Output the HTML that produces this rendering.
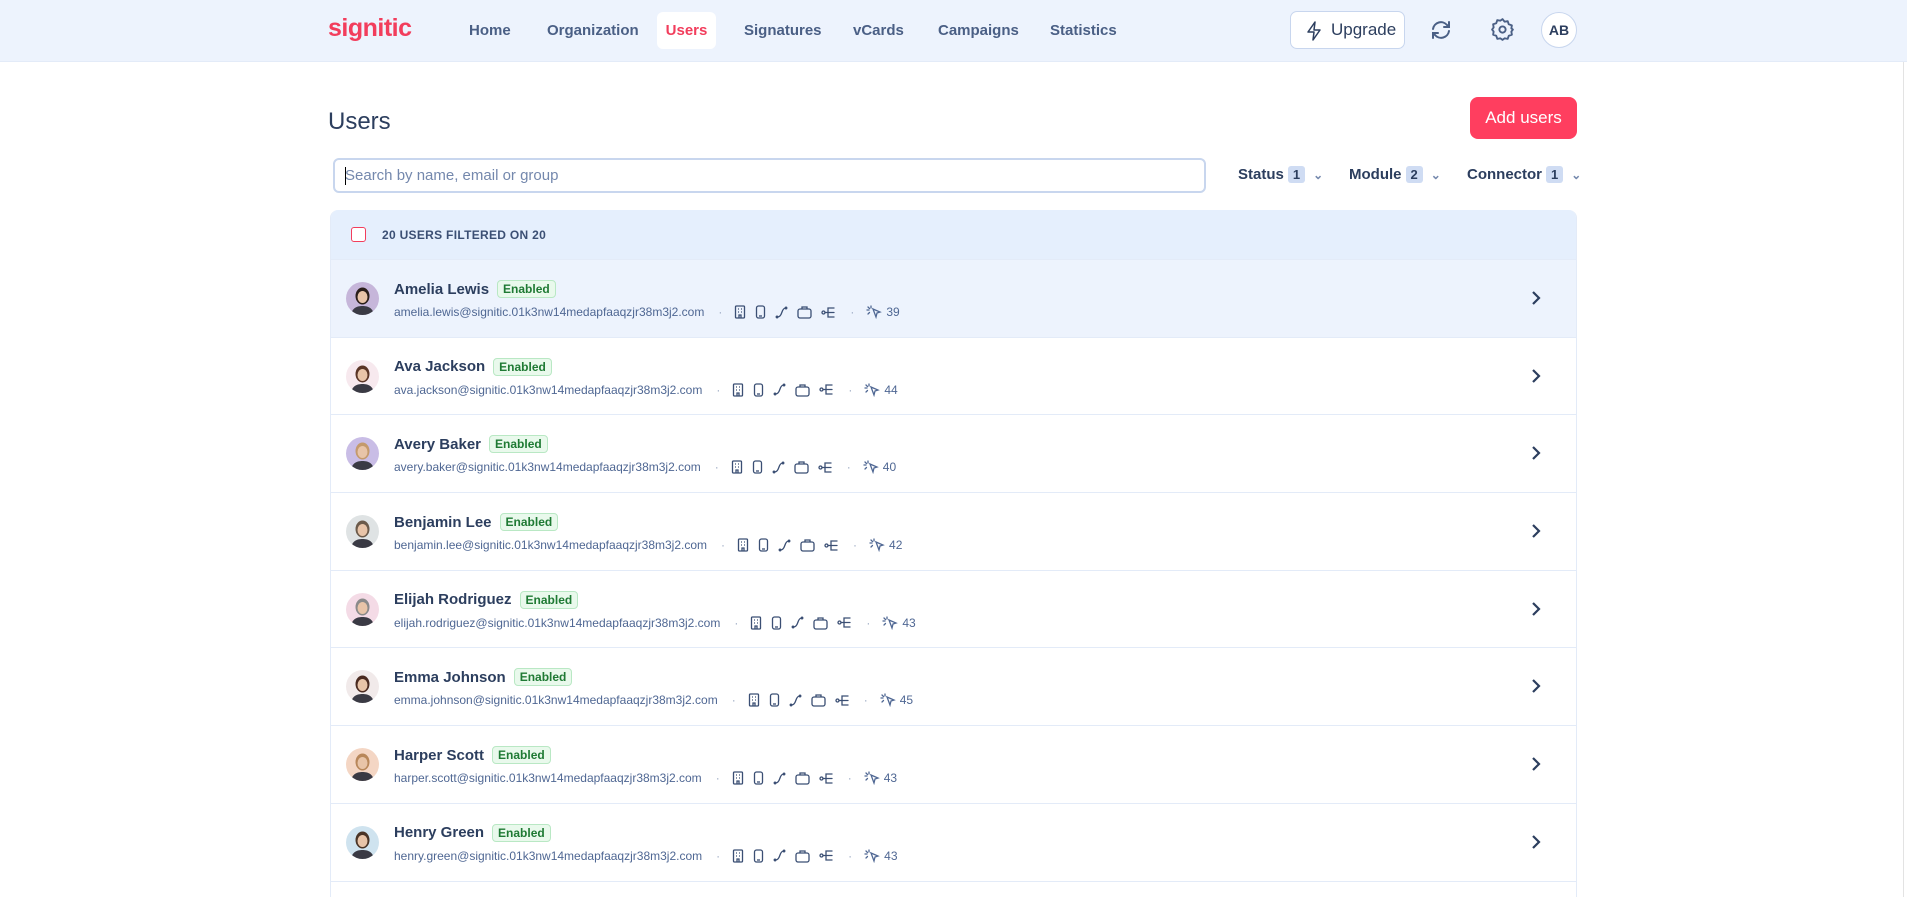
<!DOCTYPE html>
<html><head><meta charset="utf-8"><style>
*{box-sizing:border-box;margin:0;padding:0}
body{width:1907px;height:897px;overflow:hidden;background:#fff;font-family:"Liberation Sans",sans-serif;color:#2c3e5e;position:relative}
.nav{position:absolute;left:0;top:0;width:1907px;height:62px;background:#edf3fd;border-bottom:1px solid #e3ebf8}
.logo{position:absolute;left:328px;top:14px;font-size:25px;font-weight:bold;color:#f23d5c;letter-spacing:-0.5px}
.ni{position:absolute;top:22px;font-size:15px;color:#4a5f85;font-weight:bold}
.users{position:absolute;left:657px;top:12px;width:59px;height:37px;background:#fff;border-radius:6px;color:#f23d5c;font-size:15px;font-weight:bold;text-align:center;line-height:37px}
.upg{position:absolute;left:1290px;top:11px;width:115px;height:38px;border:1px solid #c8d6ee;background:#fff;border-radius:7px;font-size:17px;color:#2c3e5e;line-height:36px;padding-left:40px}
.ab{position:absolute;left:1541px;top:12px;width:36px;height:36px;border-radius:50%;background:#fff;border:1px solid #c8d6ee;font-size:14px;font-weight:bold;text-align:center;line-height:34px}
h1{position:absolute;left:328px;top:108px;font-size:24px;font-weight:normal;color:#2c3e5e}
.add{position:absolute;left:1470px;top:97px;width:107px;height:42px;background:#ff3e5f;border-radius:8px;color:#fff;font-size:17px;text-align:center;line-height:42px}
.search{position:absolute;left:333px;top:158px;width:873px;height:35px;border:2px solid #c8d6ee;border-radius:6px;font-size:15px;color:#7488ad;line-height:31px;padding-left:10px}
.search:before{content:"";position:absolute;left:10px;top:7px;width:1px;height:18px;background:#000}
.flt{position:absolute;top:166px;font-size:15px;color:#2c3e5e;font-weight:bold}
.flt b{display:inline-block;background:#cfdcf3;border-radius:3px;padding:1px 5px;margin-left:4px;font-size:13px}
.flt i{font-style:normal;color:#7488ad;margin-left:8px;font-size:12px}
.list{position:absolute;left:330px;top:210px;width:1247px;height:687px;border-left:1px solid #e3ebf8;border-right:1px solid #e3ebf8;border-radius:8px 8px 0 0;overflow:hidden}
.hdr{height:49px;background:#e5effd;position:relative}
.cb{position:absolute;left:20px;top:17px;width:15px;height:15px;border:1.5px solid #f23d5c;border-radius:3px;background:#fff}
.hdr span{position:absolute;left:51px;top:18px;font-size:12px;font-weight:bold;color:#3b4f74;letter-spacing:.3px}
.row{height:77.7px;border-top:1px solid #e3ebf8;position:relative}
.row.hl{background:#edf3fd}
.av{position:absolute;left:15px;top:22px;width:33px;height:33px;border-radius:50%;overflow:hidden}
.nm{position:absolute;left:63px;top:20px;font-size:15px;font-weight:bold;color:#2c3e5e;display:flex;align-items:center}
.en{margin-left:8px;background:#e9f9ec;border:1px solid #b9e8c4;color:#1f7a34;font-size:12px;font-weight:bold;padding:1px 5px;border-radius:4px}
.em{position:absolute;left:63px;top:45px;font-size:12px;color:#4f6793;display:flex;align-items:center}
.em .d{margin:0 12px 0 14px;color:#9aa8c2}
.em svg{margin-right:9px}
.ch{position:absolute;right:34px;top:30px}
.sb{position:absolute;left:1903px;top:62px;width:1px;height:835px;background:#e3e3e3}
</style></head><body>
<div class="nav">
<div class="logo">signitic</div>
<div class="ni" style="left:469px">Home</div>
<div class="ni" style="left:547px">Organization</div>
<div class="users">Users</div>
<div class="ni" style="left:744px">Signatures</div>
<div class="ni" style="left:853px">vCards</div>
<div class="ni" style="left:938px">Campaigns</div>
<div class="ni" style="left:1050px">Statistics</div>
<div class="upg"><svg style="position:absolute;left:14px;top:9px" width="18" height="20" viewBox="0 0 18 20"><path d="M10 1L3 11h6l-1 8 7-10H9z" fill="none" stroke="#2c3e5e" stroke-width="1.5" stroke-linejoin="round"/></svg>Upgrade</div>
<svg style="position:absolute;left:1429px;top:18px" width="24" height="24" viewBox="0 0 24 24" fill="none" stroke="#4a5f85" stroke-width="2" stroke-linecap="round"><path d="M4 11a8 8 0 0 1 14-4l2 2M20 13a8 8 0 0 1-14 4l-2-2"/><path d="M20 4v5h-5M4 20v-5h5"/></svg>
<svg style="position:absolute;left:1490px;top:17px" width="25" height="25" viewBox="0 0 24 24" fill="none" stroke="#4a5f85" stroke-width="1.8"><circle cx="12" cy="12" r="3"/><path d="M12 2l2 2.5 3-.5 1 3 3 1-.5 3L22 12l-1.5 2 .5 3-3 1-1 3-3-.5L12 22l-2-1.5-3 .5-1-3-3-1 .5-3L2 12l1.5-2-.5-3 3-1 1-3 3 .5z" stroke-linejoin="round"/></svg>
<div class="ab">AB</div>
</div>
<div class="sb"></div>
<h1>Users</h1>
<div class="add">Add users</div>
<div class="search">Search by name, email or group</div>
<div class="flt" style="left:1238px">Status<b>1</b><i>&#8964;</i></div>
<div class="flt" style="left:1349px">Module<b>2</b><i>&#8964;</i></div>
<div class="flt" style="left:1467px">Connector<b>1</b><i>&#8964;</i></div>
<div class="list">
<div class="hdr"><div class="cb"></div><span>20 USERS FILTERED ON 20</span></div>
<div id="rows"></div>
</div>
<script>
var d=[["Amelia Lewis","amelia.lewis","39","#c6b6da","#2a1e1a"],["Ava Jackson","ava.jackson","44","#f7e9ee","#5a3526"],["Avery Baker","avery.baker","40","#c9bde6","#c49a6c"],["Benjamin Lee","benjamin.lee","42","#dfe3e4","#6b5a4a"],["Elijah Rodriguez","elijah.rodriguez","43","#f4dbe6","#8a8a8a"],["Emma Johnson","emma.johnson","45","#f1eaea","#4a2a20"],["Harper Scott","harper.scott","43","#f4d6c4","#b8875a"],["Henry Green","henry.green","43","#cfe3ef","#4a3426"],["","","","#fff","#fff"]];
var ic='<svg width="12" height="14" viewBox="0 0 12 14" fill="none" stroke="#3b4f74" stroke-width="1.3"><rect x="1.5" y="1" width="9" height="12" rx="1"/><path d="M4 4h1M7 4h1M4 7h1M7 7h1M5 13v-3h2v3"/></svg>'+
'<svg width="11" height="14" viewBox="0 0 11 14" fill="none" stroke="#3b4f74" stroke-width="1.3"><rect x="1.5" y="1" width="8" height="12" rx="2"/><path d="M4 11h3"/></svg>'+
'<svg width="13" height="13" viewBox="0 0 13 13" fill="none" stroke="#3b4f74" stroke-width="1.3" stroke-linecap="round"><path d="M2 11c3 0 4-2 5-5s2-4 4-4"/><circle cx="11" cy="2" r=".8"/><circle cx="2" cy="11" r=".8"/></svg>'+
'<svg width="15" height="14" viewBox="0 0 15 14" fill="none" stroke="#3b4f74" stroke-width="1.3"><rect x="1" y="4" width="13" height="9" rx="2"/><path d="M5 4V2h5v2"/></svg>'+
'<svg width="14" height="13" viewBox="0 0 14 13" fill="none" stroke="#3b4f74" stroke-width="1.3" stroke-linecap="round"><circle cx="2.5" cy="6.5" r="1.5"/><path d="M4 6.5h9M7 6.5V2h6M7 6.5V11h6"/></svg>';
var ptr='<svg width="16" height="14" viewBox="0 0 16 14" fill="none" stroke="#4f6793" stroke-width="1.3" stroke-linecap="round"><path d="M7 4l7 3-3 1-1 4z"/><path d="M5 1v2M1 5h2M2 2l1.5 1.5M2 9l1.5-1.5"/></svg>';
var h="";
d.forEach(function(r,i){
if(!r[0]){h+='<div class="row"></div>';return;}
h+='<div class="row'+(i==0?' hl':'')+'"><div class="av" style="background:'+r[3]+'"><svg width="33" height="33" viewBox="0 0 33 33"><ellipse cx="16.5" cy="14" rx="7" ry="8.5" fill="'+r[4]+'"/><ellipse cx="16.5" cy="15" rx="5" ry="6" fill="#e8c4a8"/><path d="M5 33c1-7 6-9 11.5-9S27 26 28 33z" fill="#3a3a44"/></svg></div>'+
'<div class="nm">'+r[0]+'<span class="en">Enabled</span></div>'+
'<div class="em">'+r[1]+'@signitic.01k3nw14medapfaaqzjr38m3j2.com<span class="d">·</span>'+ic+'<span class="d" style="margin-left:6px">·</span>'+ptr+'<span style="margin-left:-5px">'+r[2]+'</span></div>'+
'<svg class="ch" width="12" height="16" viewBox="0 0 12 16"><path d="M3 2l6 6-6 6" fill="none" stroke="#2c3e5e" stroke-width="2.2"/></svg></div>';
});
document.getElementById("rows").innerHTML=h;
</script>
</body></html>
